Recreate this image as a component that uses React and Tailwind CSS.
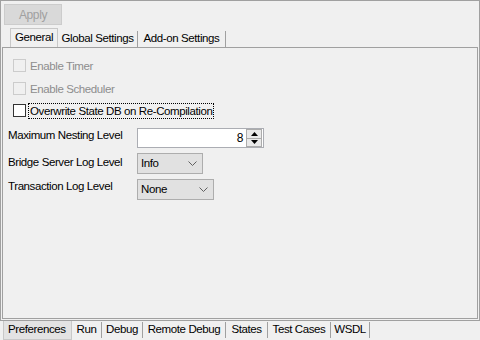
const font = { fontFamily: '"Liberation Sans", Arial, sans-serif', letterSpacing: "-0.4px" };

const Chevron = () => (
  <svg width="9" height="5" viewBox="0 0 9 5" className="shrink-0">
    <path d="M0.5 0.5 L4.5 4.5 L8.5 0.5" fill="none" stroke="#606060" strokeWidth="1" />
  </svg>
);

const Check = ({ label, disabled, focused }) => (
  <div className="flex items-center h-[13px] pl-[10px]">
    <div
      className={
        "w-[13px] h-[13px] border " +
        (disabled ? "border-[#cccccc] bg-[#f0f0f0]" : "border-[#333333] bg-white")
      }
    />
    <span
      className={
        "ml-[3px] px-px leading-[14px] whitespace-nowrap " +
        (disabled ? "text-[#8d8d8d]" : "text-black") +
        (focused ? " outline-1 outline-dotted outline-black" : "")
      }
    >
      {label}
    </span>
  </div>
);

const Combo = ({ value, width }) => (
  <div
    className={
      "h-[21px] bg-[#e1e1e1] border border-[#adadad] flex items-center justify-between pl-[3px] pr-[5px] " +
      width
    }
  >
    <span>{value}</span>
    <Chevron />
  </div>
);

const App = () => {
  const top = [
    ["Global Settings", "w-[80px]"],
    ["Add-on Settings", "w-[88px]"],
  ];
  const bottom = [
    ["Run", "w-[30px]"],
    ["Debug", "w-[41px]"],
    ["Remote Debug", "w-[83px]"],
    ["States", "w-[42px]"],
    ["Test Cases", "w-[63px]"],
    ["WSDL", "w-[39px]"],
  ];
  return (
    <div className="w-[480px] h-[340px] bg-[#f0f0f0] text-[11.5px] text-black flex flex-col" style={font}>
      <div className="h-[321px] border border-[#a0a0a0] flex flex-col px-px pb-px">
        <div className="ml-[2px] mt-[3px] w-[58px] h-[21px] bg-[#d9d9d9] border border-[#cccccc] flex items-center justify-center text-[#a0a0a0] text-[12px]">
          Apply
        </div>
        <div className="mt-[3px] h-[19px] flex pl-[8px]">
          <div className="w-[48px] h-[19px] border-l border-t border-r border-[#c8c8c8] flex items-center justify-center bg-[#f0f0f0]">
            General
          </div>
          {top.map(([t, w]) => (
            <div key={t} className={"h-[16px] flex items-center justify-center border-r border-[#a0a0a0] mt-[3px] " + w}>
              {t}
            </div>
          ))}
        </div>
        <div className="flex-1 border border-[#a0a0a0] flex flex-col">
          <div className="h-[11px]" />
          <Check label="Enable Timer" disabled />
          <div className="h-[10px]" />
          <Check label="Enable Scheduler" disabled />
          <div className="h-[9px]" />
          <Check label="Overwrite State DB on Re-Compilation" focused />
          <div className="mt-[11px] flex items-start pl-[5px]">
            <div className="w-[129px] leading-[14px] whitespace-nowrap">Maximum Nesting Level</div>
            <div className="w-[127px] h-[20px] bg-white border border-[#abadb3] flex items-center text-[12px]">
              <span className="flex-1 text-right pr-[3px]">8</span>
              <div className="w-[16px] h-[18px] border border-[#acacac] bg-[#e9e9e9] flex flex-col mr-[1px]">
                <div className="flex-1 flex items-center justify-center border-b border-[#acacac]">
                  <svg width="7" height="4" viewBox="0 0 7 4"><path d="M3.5 0 L7 4 L0 4 Z" fill="#000" /></svg>
                </div>
                <div className="flex-1 flex items-center justify-center">
                  <svg width="7" height="4" viewBox="0 0 7 4"><path d="M0 0 L7 0 L3.5 4 Z" fill="#000" /></svg>
                </div>
              </div>
            </div>
          </div>
          <div className="mt-[5px] flex items-start pl-[5px]">
            <div className="w-[129px] leading-[14px] pt-[2px] whitespace-nowrap">Bridge Server Log Level</div>
            <Combo value="Info" width="w-[66px]" />
          </div>
          <div className="mt-[5px] flex items-start pl-[5px]">
            <div className="w-[129px] leading-[14px] whitespace-nowrap">Transaction Log Level</div>
            <Combo value="None" width="w-[77px]" />
          </div>
        </div>
      </div>
      <div className="h-[19px] flex pl-[3px]">
        <div className="w-[69px] h-[19px] pl-[4px] flex items-center bg-[#e3e3e3] border-l border-r border-b border-[#c8c8c8]">
          Preferences
        </div>
        {bottom.map(([t, w]) => (
          <div key={t} className={"h-[16px] mt-px flex items-center justify-center border-r border-[#a0a0a0] " + w}>
            {t}
          </div>
        ))}
      </div>
    </div>
  );
};

export default App;
